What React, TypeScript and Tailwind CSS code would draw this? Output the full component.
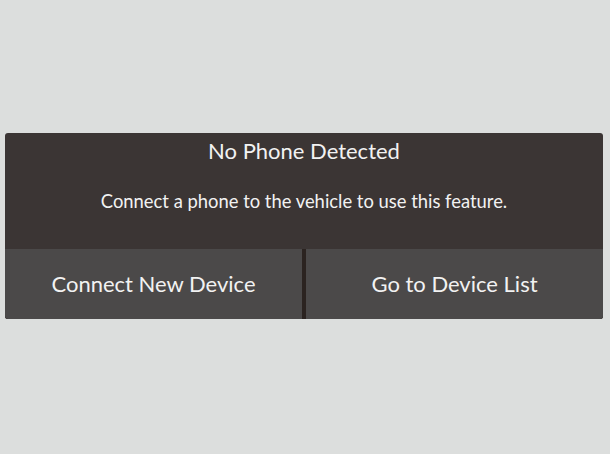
export default function App() {
  return (
    <div className="w-[610px] h-[454px] bg-[#dcdedd] flex flex-col pt-[133px] px-[5px] font-['Lato','Liberation_Sans',sans-serif]">
      <div className="w-[598px] rounded-[3px] overflow-hidden bg-[#3b3534] flex flex-col">
        <div className="h-[116px] flex flex-col items-center text-[#f2f2f2]">
          <div className="mt-[4px] text-[22px] leading-[28px]">No Phone Detected</div>
          <div className="mt-[25px] text-[18.4px] leading-[22px]">Connect a phone to the vehicle to use this feature.</div>
        </div>
        <div className="h-[70px] flex bg-[#2b2320]">
          <button className="flex-1 bg-[#4b4949] text-[#f2f2f2] text-[22px] pb-[2px] flex items-center justify-center">
            Connect New Device
          </button>
          <div className="w-[4px]" />
          <button className="flex-1 bg-[#4b4949] text-[#f2f2f2] text-[22px] pb-[2px] flex items-center justify-center">
            Go to Device List
          </button>
        </div>
      </div>
    </div>
  );
}
